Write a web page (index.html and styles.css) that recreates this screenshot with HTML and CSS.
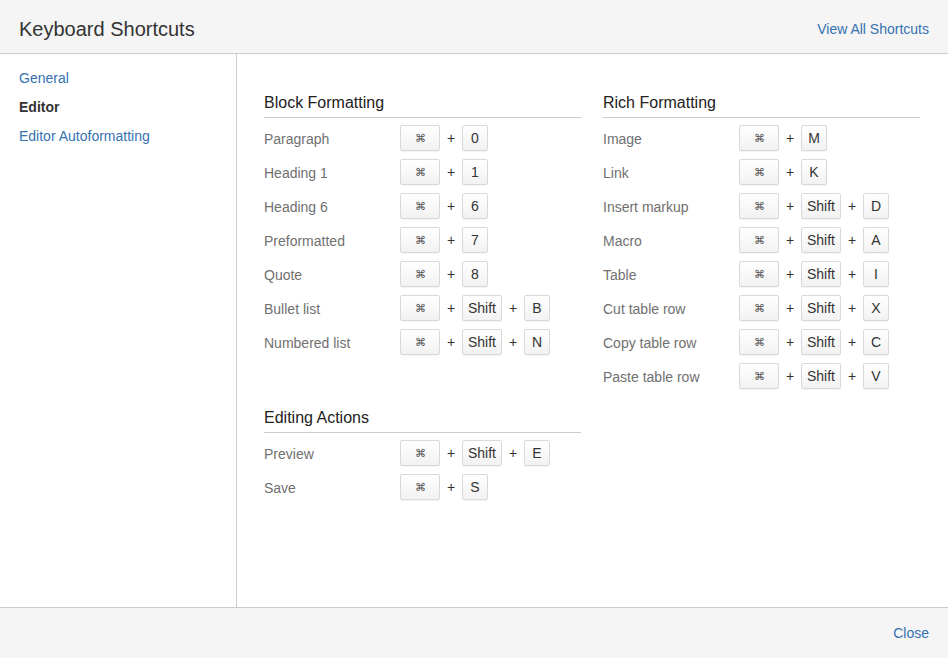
FILE: index.html
```html
<!DOCTYPE html>
<html>
<head>
<meta charset="utf-8">
<link rel="stylesheet" href="styles.css">
</head>
<body>
<div class="dialog">
  <header class="dialog-header">
    <h1 class="dialog-title">Keyboard Shortcuts</h1>
    <a class="link header-link" href="#">View All Shortcuts</a>
  </header>
  <div class="dialog-body">
    <nav class="sidebar">
      <a class="nav-item link" href="#">General</a>
      <span class="nav-item active">Editor</span>
      <a class="nav-item link" href="#">Editor Autoformatting</a>
    </nav>
    <main class="content">
      <div class="column">
        <section class="group">
          <h2 class="group-title">Block Formatting</h2>
          <div class="row"><span class="label">Paragraph</span><span class="keys"><kbd class="key cmd">⌘</kbd><span class="plus">+</span><kbd class="key">0</kbd></span></div>
          <div class="row"><span class="label">Heading 1</span><span class="keys"><kbd class="key cmd">⌘</kbd><span class="plus">+</span><kbd class="key">1</kbd></span></div>
          <div class="row"><span class="label">Heading 6</span><span class="keys"><kbd class="key cmd">⌘</kbd><span class="plus">+</span><kbd class="key">6</kbd></span></div>
          <div class="row"><span class="label">Preformatted</span><span class="keys"><kbd class="key cmd">⌘</kbd><span class="plus">+</span><kbd class="key">7</kbd></span></div>
          <div class="row"><span class="label">Quote</span><span class="keys"><kbd class="key cmd">⌘</kbd><span class="plus">+</span><kbd class="key">8</kbd></span></div>
          <div class="row"><span class="label">Bullet list</span><span class="keys"><kbd class="key cmd">⌘</kbd><span class="plus">+</span><kbd class="key">Shift</kbd><span class="plus">+</span><kbd class="key">B</kbd></span></div>
          <div class="row"><span class="label">Numbered list</span><span class="keys"><kbd class="key cmd">⌘</kbd><span class="plus">+</span><kbd class="key">Shift</kbd><span class="plus">+</span><kbd class="key">N</kbd></span></div>
        </section>
        <section class="group">
          <h2 class="group-title">Editing Actions</h2>
          <div class="row"><span class="label">Preview</span><span class="keys"><kbd class="key cmd">⌘</kbd><span class="plus">+</span><kbd class="key">Shift</kbd><span class="plus">+</span><kbd class="key">E</kbd></span></div>
          <div class="row"><span class="label">Save</span><span class="keys"><kbd class="key cmd">⌘</kbd><span class="plus">+</span><kbd class="key">S</kbd></span></div>
        </section>
      </div>
      <div class="column">
        <section class="group">
          <h2 class="group-title">Rich Formatting</h2>
          <div class="row"><span class="label">Image</span><span class="keys"><kbd class="key cmd">⌘</kbd><span class="plus">+</span><kbd class="key">M</kbd></span></div>
          <div class="row"><span class="label">Link</span><span class="keys"><kbd class="key cmd">⌘</kbd><span class="plus">+</span><kbd class="key">K</kbd></span></div>
          <div class="row"><span class="label">Insert markup</span><span class="keys"><kbd class="key cmd">⌘</kbd><span class="plus">+</span><kbd class="key">Shift</kbd><span class="plus">+</span><kbd class="key">D</kbd></span></div>
          <div class="row"><span class="label">Macro</span><span class="keys"><kbd class="key cmd">⌘</kbd><span class="plus">+</span><kbd class="key">Shift</kbd><span class="plus">+</span><kbd class="key">A</kbd></span></div>
          <div class="row"><span class="label">Table</span><span class="keys"><kbd class="key cmd">⌘</kbd><span class="plus">+</span><kbd class="key">Shift</kbd><span class="plus">+</span><kbd class="key">I</kbd></span></div>
          <div class="row"><span class="label">Cut table row</span><span class="keys"><kbd class="key cmd">⌘</kbd><span class="plus">+</span><kbd class="key">Shift</kbd><span class="plus">+</span><kbd class="key">X</kbd></span></div>
          <div class="row"><span class="label">Copy table row</span><span class="keys"><kbd class="key cmd">⌘</kbd><span class="plus">+</span><kbd class="key">Shift</kbd><span class="plus">+</span><kbd class="key">C</kbd></span></div>
          <div class="row"><span class="label">Paste table row</span><span class="keys"><kbd class="key cmd">⌘</kbd><span class="plus">+</span><kbd class="key">Shift</kbd><span class="plus">+</span><kbd class="key">V</kbd></span></div>
        </section>
      </div>
    </main>
  </div>
  <footer class="dialog-footer">
    <a class="link" href="#">Close</a>
  </footer>
</div>
</body>
</html>
```

FILE: styles.css
```css
* { box-sizing: border-box; }
html, body { margin: 0; padding: 0; }
body {
  width: 948px;
  height: 658px;
  overflow: hidden;
  font-family: "Liberation Sans", Arial, sans-serif;
  font-size: 14px;
  color: #333;
  background: #fff;
}
.link { color: #3572b0; text-decoration: none; }
.dialog { display: flex; flex-direction: column; height: 658px; }
.dialog-header {
  height: 54px;
  flex: none;
  background: #f5f5f5;
  border-bottom: 1px solid #ccc;
  display: flex;
  align-items: center;
  justify-content: space-between;
  padding: 4px 19px 0 19px;
}
.dialog-title {
  margin: 0;
  font-size: 20px;
  font-weight: normal;
  color: #333;
  line-height: 24px;
}
.header-link { font-size: 14px; padding-top: 1px; }
.dialog-body { flex: 1; display: flex; min-height: 0; }
.sidebar {
  width: 237px;
  flex: none;
  border-right: 1px solid #ccc;
  padding: 10px 19px;
  display: flex;
  flex-direction: column;
}
.nav-item { line-height: 29px; font-size: 14px; }
.nav-item.active { font-weight: bold; color: #333; }
.content {
  flex: 1;
  display: flex;
  gap: 22px;
  padding: 38px 27px 0 27px;
}
.column { width: 317px; flex: none; }
.group + .group { margin-top: 48px; }
.group-title {
  margin: 0 0 3px 0;
  font-size: 16px;
  font-weight: normal;
  color: #222;
  line-height: 20px;
  padding: 1px 0 4px 0;
  border-bottom: 1px solid #ccc;
}
.row { height: 34px; display: flex; align-items: center; }
.label { width: 136px; flex: none; color: #707070; padding-top: 2px; }
.keys { display: flex; align-items: center; }
.key {
  font-family: "Liberation Sans", Arial, sans-serif;
  font-size: 14px;
  color: #333;
  height: 26px;
  line-height: 24px;
  min-width: 26px;
  padding: 0 5px;
  text-align: center;
  border: 1px solid #d9d9d9;
  border-radius: 2px;
  background: linear-gradient(#fff, #f2f2f2);
  box-shadow: 0 1px 0 rgba(0,0,0,0.04);
}
.key.cmd { width: 40px; font-size: 11px; color: #555; }
.plus { width: 22px; text-align: center; color: #333; }
.dialog-footer {
  height: 51px;
  flex: none;
  background: #f5f5f5;
  border-top: 1px solid #ccc;
  display: flex;
  align-items: center;
  justify-content: flex-end;
  padding: 0 19px 0 0;
}
```
